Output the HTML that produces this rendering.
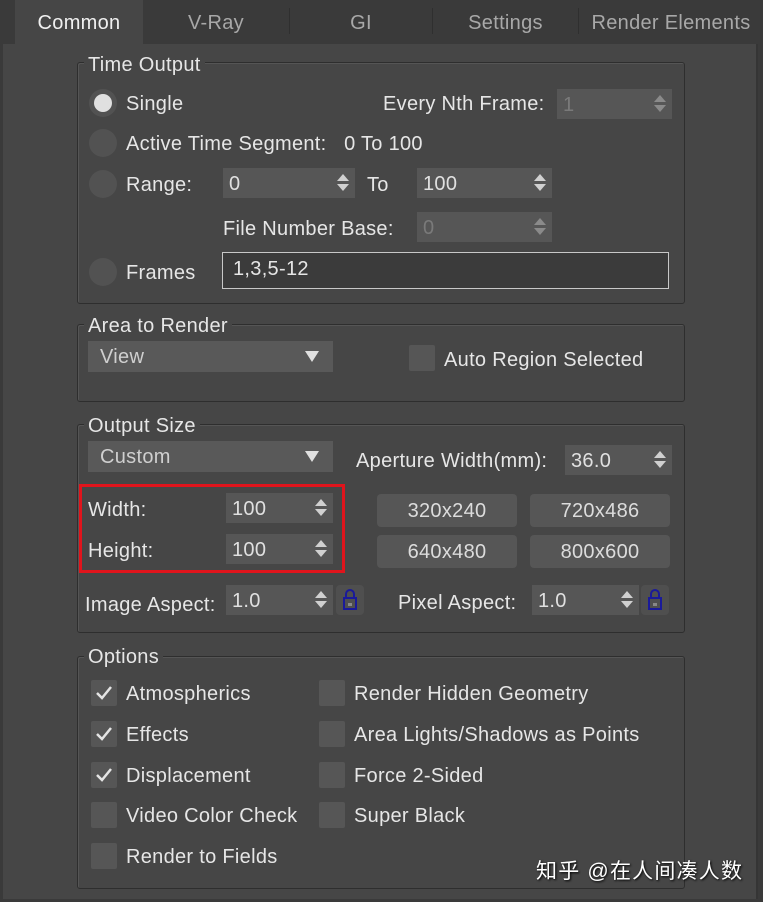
<!DOCTYPE html>
<html><head><meta charset="utf-8"><style>
*{box-sizing:border-box;margin:0;padding:0}
body{width:763px;height:902px;background:#3a3a3a;font-family:"Liberation Sans","Noto Sans CJK SC",sans-serif;font-size:20px;letter-spacing:0.3px;color:#e6e6e6;position:relative;overflow:hidden}
.a{position:absolute;white-space:nowrap}
.t{margin-top:3px}
#panel{position:absolute;left:3px;top:44px;width:755px;height:855px;background:#464646;border-right:2px solid #353535}
.tab{position:absolute;top:0;height:44px;line-height:46px;text-align:center;color:#a8a8a8}
.sep{position:absolute;top:8px;width:1px;height:26px;background:#2f2f2f}
.grp{position:absolute;left:77px;width:608px;border:1px solid #2e2e2e;border-radius:3px;box-shadow:1px 1px 0 #555 inset}
.lg{position:absolute;background:#464646;padding:0 4px;line-height:22px}
.radio{position:absolute;width:28px;height:28px;border-radius:50%;background:#525252}
.sel::after{content:"";position:absolute;left:5px;top:5px;width:18px;height:18px;border-radius:50%;background:#e0e0e0}
.inp{position:absolute;height:30px;background:#565656;line-height:32px;padding-left:6px;color:#e0e0e0}
.inp.dis{color:#7a7a7a}
.spin{position:absolute;right:6px;top:6px;width:12px;height:18px}
.spin::before{content:"";position:absolute;left:0;top:0;border-left:6px solid transparent;border-right:6px solid transparent;border-bottom:7px solid #d0d0d0}
.spin::after{content:"";position:absolute;left:0;top:10px;border-left:6px solid transparent;border-right:6px solid transparent;border-top:7px solid #d0d0d0}
.dis .spin::before{border-bottom-color:#8a8a8a}.dis .spin::after{border-top-color:#8a8a8a}
.dd{position:absolute;height:31px;background:#595959;line-height:33px;padding-left:12px;color:#cfcfcf}
.dd::after{content:"";position:absolute;right:14px;top:10px;border-left:7px solid transparent;border-right:7px solid transparent;border-top:11px solid #e0e0e0}
.btn{position:absolute;height:33px;background:#565656;border-radius:4px;text-align:center;line-height:35px;color:#dcdcdc;width:140px}
.cb{position:absolute;width:26px;height:26px;background:#565656;border-radius:2px}
.lock{position:absolute;width:28px;height:30px;background:#4f4f4f;border-radius:4px}
</style></head><body>
<div class="tab" style="left:15px;width:128px;background:#464646;color:#f0f0f0">Common</div>
<div class="tab" style="left:143px;width:146px">V-Ray</div>
<div class="sep" style="left:289px"></div>
<div class="tab" style="left:290px;width:142px">GI</div>
<div class="sep" style="left:432px"></div>
<div class="tab" style="left:433px;width:145px">Settings</div>
<div class="sep" style="left:578px"></div>
<div class="tab" style="left:579px;width:184px">Render Elements</div>
<div id="panel"></div>

<!-- Time Output -->
<div class="grp" style="top:62px;height:242px"></div>
<div class="lg a t" style="left:84px;top:51px">Time Output</div>
<div class="radio sel" style="left:89px;top:89px"></div><div class="a t" style="left:126px;top:90px">Single</div>
<div class="a t" style="left:383px;top:90px">Every Nth Frame:</div>
<div class="inp dis" style="left:557px;top:89px;width:115px">1<div class="spin"></div></div>
<div class="radio" style="left:89px;top:129px"></div><div class="a t" style="left:126px;top:130px">Active Time Segment:&nbsp;&nbsp; 0 To 100</div>
<div class="radio" style="left:89px;top:170px"></div><div class="a t" style="left:126px;top:171px">Range:</div>
<div class="inp" style="left:223px;top:168px;width:132px">0<div class="spin"></div></div>
<div class="a t" style="left:367px;top:171px">To</div>
<div class="inp" style="left:417px;top:168px;width:135px">100<div class="spin"></div></div>
<div class="a t" style="left:223px;top:215px">File Number Base:</div>
<div class="inp dis" style="left:417px;top:212px;width:135px">0<div class="spin"></div></div>
<div class="radio" style="left:89px;top:258px"></div><div class="a t" style="left:126px;top:259px">Frames</div>
<div class="a" style="left:222px;top:252px;width:447px;height:37px;background:#3b3b3b;border:1px solid #c8c8c8;padding-left:10px;line-height:33px">1,3,5-12</div>

<!-- Area to Render -->
<div class="grp" style="top:324px;height:78px"></div>
<div class="lg a t" style="left:84px;top:312px">Area to Render</div>
<div class="dd" style="left:88px;top:341px;width:245px">View</div>
<div class="cb" style="left:409px;top:345px"></div>
<div class="a t" style="left:444px;top:346px">Auto Region Selected</div>

<!-- Output Size -->
<div class="grp" style="top:424px;height:209px"></div>
<div class="lg a t" style="left:84px;top:412px">Output Size</div>
<div class="dd" style="left:88px;top:441px;width:245px">Custom</div>
<div class="a t" style="left:356px;top:447px">Aperture Width(mm):</div>
<div class="inp" style="left:565px;top:445px;width:107px">36.0<div class="spin"></div></div>
<div class="a" style="left:79px;top:484px;width:266px;height:89px;border:3px solid #e0141c"></div>
<div class="a t" style="left:88px;top:496px">Width:</div>
<div class="inp" style="left:226px;top:493px;width:107px">100<div class="spin"></div></div>
<div class="a t" style="left:88px;top:537px">Height:</div>
<div class="inp" style="left:226px;top:534px;width:107px">100<div class="spin"></div></div>
<div class="btn" style="left:377px;top:494px">320x240</div>
<div class="btn" style="left:530px;top:494px">720x486</div>
<div class="btn" style="left:377px;top:535px">640x480</div>
<div class="btn" style="left:530px;top:535px">800x600</div>
<div class="a t" style="left:85px;top:591px">Image Aspect:</div>
<div class="inp" style="left:226px;top:585px;width:107px">1.0<div class="spin"></div></div>
<div class="lock" style="left:336px;top:585px"><svg width="28" height="30"><rect x="8" y="13" width="12" height="11" fill="none" stroke="#1a1a9a" stroke-width="2"/><path d="M10 13V9a4 4 0 0 1 8 0v4" fill="none" stroke="#1a1a9a" stroke-width="2"/><rect x="12" y="18" width="4" height="3" fill="#888"/></svg></div>
<div class="a t" style="left:398px;top:589px">Pixel Aspect:</div>
<div class="inp" style="left:532px;top:585px;width:107px">1.0<div class="spin"></div></div>
<div class="lock" style="left:641px;top:585px"><svg width="28" height="30"><rect x="8" y="13" width="12" height="11" fill="none" stroke="#1a1a9a" stroke-width="2"/><path d="M10 13V9a4 4 0 0 1 8 0v4" fill="none" stroke="#1a1a9a" stroke-width="2"/><rect x="12" y="18" width="4" height="3" fill="#888"/></svg></div>

<!-- Options -->
<div class="grp" style="top:656px;height:233px"></div>
<div class="lg a t" style="left:84px;top:643px">Options</div>
<div class="cb" style="left:91px;top:680px"><svg width="26" height="26"><path d="M6 13l5 5 9-11" fill="none" stroke="#e4e4e4" stroke-width="2.5"/></svg></div><div class="a t" style="left:126px;top:680px">Atmospherics</div>
<div class="cb" style="left:91px;top:721px"><svg width="26" height="26"><path d="M6 13l5 5 9-11" fill="none" stroke="#e4e4e4" stroke-width="2.5"/></svg></div><div class="a t" style="left:126px;top:721px">Effects</div>
<div class="cb" style="left:91px;top:762px"><svg width="26" height="26"><path d="M6 13l5 5 9-11" fill="none" stroke="#e4e4e4" stroke-width="2.5"/></svg></div><div class="a t" style="left:126px;top:762px">Displacement</div>
<div class="cb" style="left:91px;top:802px"></div><div class="a t" style="left:126px;top:802px">Video Color Check</div>
<div class="cb" style="left:91px;top:843px"></div><div class="a t" style="left:126px;top:843px">Render to Fields</div>
<div class="cb" style="left:319px;top:680px"></div><div class="a t" style="left:354px;top:680px">Render Hidden Geometry</div>
<div class="cb" style="left:319px;top:721px"></div><div class="a t" style="left:354px;top:721px">Area Lights/Shadows as Points</div>
<div class="cb" style="left:319px;top:762px"></div><div class="a t" style="left:354px;top:762px">Force 2-Sided</div>
<div class="cb" style="left:319px;top:802px"></div><div class="a t" style="left:354px;top:802px">Super Black</div>
<div class="a" style="left:536px;top:855px;color:#fff;font-size:21px;letter-spacing:1.2px;text-shadow:1px 1px 2px #000">知乎 @在人间凑人数</div>
</body></html>
